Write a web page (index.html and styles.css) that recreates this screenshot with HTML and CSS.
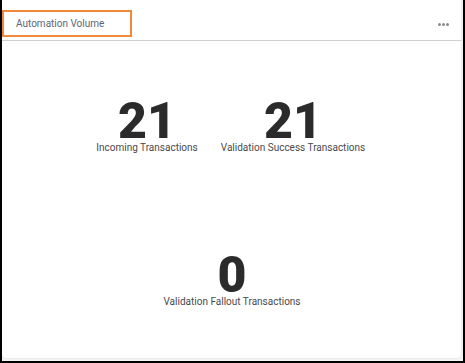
FILE: index.html
```html
<!DOCTYPE html>
<html lang="en">
<head>
  <meta charset="UTF-8" />
  <title>Automation Volume</title>
  <link rel="stylesheet" href="styles.css">
</head>
<body>
  <div class="frame">
    <div class="card">
      <div class="card-head">
        <div class="title-box">Automation Volume</div>
        <div class="menu"><span></span><span></span><span></span></div>
      </div>
      <div class="stats">
        <div class="row top">
          <div class="stat">
            <div class="num">21</div>
            <div class="label">Incoming Transactions</div>
          </div>
          <div class="stat">
            <div class="num">21</div>
            <div class="label">Validation Success Transactions</div>
          </div>
        </div>
        <div class="row bottom">
          <div class="stat">
            <div class="num">0</div>
            <div class="label">Validation Fallout Transactions</div>
          </div>
        </div>
      </div>
    </div>
  </div>
</body>
</html>
```

FILE: styles.css
```css
/* base */
body {
  margin: 0;
  font-family: Roboto, "Liberation Sans", sans-serif;
  background: #fff;
}
.frame {
  width: 465px;
  height: 363px;
  box-sizing: border-box;
  border: 2px solid #000;
  border-top: none;
  background: #f4f4f4;
  padding: 0 2px 3px 0;
}
.card {
  height: 100%;
  background: #fff;
  border-radius: 0 0 4px 4px;
  box-shadow: 0 0 2px rgba(0,0,0,0.12);
}
.card-head {
  display: flex;
  justify-content: space-between;
  align-items: center;
  height: 41px;
  border-bottom: 1.5px solid #cfcfcf;
  box-sizing: border-box;
}
.title-box {
  margin-top: 10px;
  width: 130px;
  height: 27px;
  box-sizing: border-box;
  border: 2px solid #f08a3a;
  padding-left: 12px;
  font-size: 10px;
  line-height: 23px;
  color: #5d6475;
  align-self: flex-start;
}
.menu {
  display: flex;
  gap: 1px;
  margin-right: 12px;
  margin-top: 9px;
}
.menu span {
  width: 3px;
  height: 3px;
  border-radius: 50%;
  background: #8a8a8a;
}
.stats { padding-top: 60px; }
.row { display: flex; }
.row.top { padding-left: 72px; }
.row.bottom { justify-content: center; margin-top: 101px; padding-left: 1px; }
.stat {
  width: 146px;
  text-align: center;
}
.row.bottom .stat { width: 160px; }
.num {
  font-size: 50px;
  font-weight: 900;
  line-height: 40px;
  color: #2b2b2b;
}
.label {
  font-size: 10px;
  line-height: 12px;
  color: #4a4a4a;
  margin-top: 1px;
}
```
